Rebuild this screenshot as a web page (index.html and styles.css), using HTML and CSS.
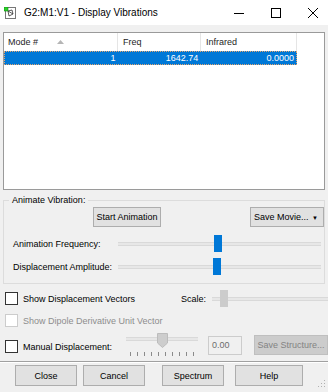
FILE: index.html
```html
<!DOCTYPE html>
<html lang="en">
<head>
    <meta charset="UTF-8">
    <title>G2:M1:V1 - Display Vibrations</title>
    <link rel="stylesheet" href="styles.css">
</head>
<body>
    <div class="titlebar">
        <svg class="app-icon" width="12" height="12" viewBox="0 0 12 12">
            <rect x="1.5" y="0.5" width="10" height="11" fill="#fff" stroke="#777"/>
            <path d="M4 4 L8 3 L9 7 L5 9 Z M4 4 L9 7" fill="none" stroke="#333" stroke-width="0.8"/>
            <rect x="0" y="0" width="4" height="4" fill="#2bd12b" stroke="#118811" stroke-width="0.6"/>
        </svg>
        <span class="title">G2:M1:V1 - Display Vibrations</span>
        <div class="win-buttons">
            <span class="win-btn"><svg width="10" height="10" viewBox="0 0 10 10"><path d="M0 5.5 H10" stroke="#000"/></svg></span>
            <span class="win-btn"><svg width="10" height="10" viewBox="0 0 10 10"><rect x="0.5" y="0.5" width="9" height="9" fill="none" stroke="#000"/></svg></span>
            <span class="win-btn"><svg width="10" height="10" viewBox="0 0 10 10"><path d="M0 0 L10 10 M10 0 L0 10" stroke="#000"/></svg></span>
        </div>
    </div>

    <div class="dialog">
        <div class="list">
            <div class="list-header">
                <div class="col col-mode">Mode #
                    <svg class="sort" width="7" height="4" viewBox="0 0 7 4"><path d="M0 4 L3.5 0 L7 4 Z" fill="#b5b5b5"/></svg>
                </div>
                <div class="col col-freq">Freq</div>
                <div class="col col-ir">Infrared</div>
            </div>
            <div class="list-row selected">
                <div class="cell col-mode">1</div>
                <div class="cell col-freq">1642.74</div>
                <div class="cell col-ir">0.0000</div>
            </div>
        </div>

        <fieldset class="group">
            <legend>Animate Vibration:</legend>
            <div class="group-buttons">
                <button class="btn btn-start">Start Animation</button>
                <button class="btn btn-movie">Save Movie... <span class="drop">&#9660;</span></button>
            </div>
            <div class="slider-row">
                <span class="slider-label">Animation Frequency:</span>
                <div class="slider">
                    <div class="track"></div>
                    <div class="thumb" style="left: 96px;"></div>
                </div>
            </div>
            <div class="slider-row">
                <span class="slider-label">Displacement Amplitude:</span>
                <div class="slider">
                    <div class="track"></div>
                    <div class="thumb" style="left: 95px;"></div>
                </div>
            </div>
        </fieldset>

        <div class="option-row">
            <label class="check"><span class="box"></span>Show Displacement Vectors</label>
            <span class="scale-label">Scale:</span>
            <div class="slider scale-slider">
                <div class="track"></div>
                <div class="thumb thumb-off" style="left: 8px;"></div>
            </div>
        </div>

        <div class="option-row dipole">
            <label class="check disabled"><span class="box"></span>Show Dipole Derivative Unit Vector</label>
        </div>

        <div class="option-row manual">
            <label class="check manual-check"><span class="box"></span>Manual Displacement:</label>
            <div class="tick-slider">
                <div class="track"></div>
                <svg class="tick-thumb" style="left: 31px;" width="11" height="15" viewBox="0 0 11 15">
                    <path d="M0.5 0.5 H10.5 V10 L5.5 14.5 L0.5 10 Z" fill="#cdcdcd" stroke="#bcbcbc"/>
                </svg>
                <div class="ticks">
                    <span></span><span></span><span></span><span></span><span></span>
                    <span></span><span></span><span></span><span></span><span></span>
                </div>
            </div>
            <div class="textbox">0.00</div>
            <button class="btn btn-structure" disabled>Save Structure...</button>
        </div>

        <div class="separator"></div>

        <div class="footer">
            <button class="btn btn-foot btn-close">Close</button>
            <button class="btn btn-foot btn-cancel">Cancel</button>
            <button class="btn btn-foot btn-spectrum">Spectrum</button>
            <button class="btn btn-foot btn-help">Help</button>
            <svg class="grip" width="8" height="8" viewBox="0 0 8 8">
                <rect x="6" y="0" width="1" height="1" fill="#b0b0b0"/>
                <rect x="3" y="3" width="1" height="1" fill="#b0b0b0"/>
                <rect x="6" y="3" width="1" height="1" fill="#b0b0b0"/>
                <rect x="0" y="6" width="1" height="1" fill="#b0b0b0"/>
                <rect x="3" y="6" width="1" height="1" fill="#b0b0b0"/>
                <rect x="6" y="6" width="1" height="1" fill="#b0b0b0"/>
            </svg>
        </div>
    </div>
</body>
</html>
```

FILE: styles.css
```css
body {
    margin: 0;
    width: 328px;
    height: 392px;
    overflow: hidden;
    background: #f0f0f0;
    font-family: "Liberation Sans", Arial, sans-serif;
    font-size: 9px;
    color: #000;
}

.titlebar {
    height: 25px;
    background: #fff;
    display: flex;
    align-items: center;
    overflow: hidden;
}

.app-icon {
    margin-left: 4px;
}

.title {
    margin-left: 8px;
    font-size: 10px;
    color: #000;
}

.win-buttons {
    display: flex;
    margin-left: auto;
    margin-right: -3px;
}

.win-btn {
    width: 37px;
    height: 25px;
    display: flex;
    align-items: center;
    justify-content: center;
}

.dialog {
    padding: 7px 3px 0;
}

.list {
    height: 156px;
    background: #fff;
    border: 1px solid #9a9a9a;
}

.list-header {
    display: flex;
    height: 18px;
}

.col {
    display: flex;
    align-items: center;
    padding-left: 4px;
    box-sizing: border-box;
    border-right: 1px solid #e5e5e5;
    color: #1e1e1e;
}

.col-mode {
    width: 114px;
}

.col-freq {
    width: 83px;
}

.col-ir {
    width: 96px;
}

.col-freq.col,
.col-ir.col {
    padding-left: 5px;
}

.sort {
    margin-left: 19px;
}

.list-row {
    display: flex;
    height: 14px;
    width: 293px;
    box-sizing: border-box;
    border: 1px dotted #e5a56e;
}

.list-row.selected {
    background: #0078d7;
    color: #fff;
}

.cell {
    text-align: right;
    line-height: 12px;
    padding-right: 2px;
    box-sizing: border-box;
}

.cell.col-mode {
    width: 113px;
}

.group {
    margin: 4px 0 0;
    padding: 1px 0 5px;
    border: 1px solid #dcdcdc;
    min-width: 0;
}

.group legend {
    margin-left: 5px;
    padding: 0 3px;
    line-height: 12px;
}

.group-buttons {
    display: flex;
}

.btn {
    font-family: "Liberation Sans", Arial, sans-serif;
    font-size: 9px;
    color: #000;
    background: #e1e1e1;
    border: 1px solid #adadad;
    height: 20px;
    padding: 0;
    box-sizing: border-box;
}

.btn-start {
    margin-left: 89px;
    width: 68px;
}

.btn-movie {
    margin-left: auto;
    width: 74px;
    padding-left: 3px;
    text-align: left;
}

.drop {
    font-size: 6px;
    margin-left: 1px;
}

.slider-row {
    display: flex;
    align-items: center;
    height: 23px;
}

.group-buttons + .slider-row {
    margin-top: 5px;
}

.slider-label {
    width: 105px;
    padding-left: 9px;
}

.slider {
    position: relative;
    width: 203px;
    height: 17px;
}

.track {
    position: absolute;
    left: 0;
    right: 0;
    top: 7px;
    height: 2px;
    background: #e7e7e7;
    border: 1px solid #d9d9d9;
    border-width: 1px 0;
}

.thumb {
    position: absolute;
    top: 0;
    width: 8px;
    height: 17px;
    background: #0078d7;
}

.thumb-off {
    background: #cccccc;
}

.option-row {
    display: flex;
    align-items: center;
    height: 17px;
    margin-top: 6px;
}

.check {
    display: flex;
    align-items: center;
    width: 178px;
}

.box {
    width: 13px;
    height: 13px;
    box-sizing: border-box;
    border: 1px solid #333;
    background: #fff;
    margin-left: 2px;
    margin-right: 5px;
}

.check.disabled {
    color: #8d8d8d;
    width: auto;
}

.check.disabled .box {
    border-color: #cccccc;
}

.scale-label {
    width: 31px;
}

.scale-slider {
    flex: 1;
    margin-right: -3px;
}

.option-row.dipole {
    margin-top: 5px;
}

.option-row.manual {
    align-items: flex-start;
    height: 25px;
    margin-top: 4px;
}

.manual-check {
    width: 123px;
    margin-top: 7px;
}

.tick-slider {
    position: relative;
    width: 72px;
    height: 25px;
}

.tick-slider .track {
    top: 4px;
}

.tick-thumb {
    position: absolute;
    top: 0;
}

.ticks {
    position: absolute;
    left: 4px;
    right: 4px;
    top: 19px;
    display: flex;
    justify-content: space-between;
}

.ticks span {
    width: 1px;
    height: 4px;
    background: #8a8a8a;
}

.textbox {
    margin-left: 10px;
    margin-top: 3px;
    width: 34px;
    height: 19px;
    box-sizing: border-box;
    border: 1px solid #cccccc;
    background: #f0f0f0;
    color: #6d6d6d;
    padding-left: 3px;
    line-height: 17px;
}

.btn-structure {
    margin-left: 12px;
    margin-top: 2px;
    margin-right: -3px;
    width: 74px;
    background: #cccccc;
    border-color: #bfbfbf;
    color: #838383;
}

.separator {
    margin: 3px -3px 0;
    border-top: 1px solid #a0a0a0;
    border-bottom: 1px solid #fff;
}

.footer {
    display: flex;
    margin-top: 2px;
    height: 25px;
}

.btn-foot {
    width: 62px;
    height: 21px;
}

.btn-close {
    margin-left: 12px;
}

.btn-cancel {
    margin-left: 6px;
}

.btn-spectrum {
    margin-left: 17px;
}

.btn-help {
    margin-left: 11px;
    width: 68px;
}

.grip {
    margin-left: auto;
    margin-right: -1px;
    margin-bottom: 2px;
    align-self: flex-end;
}
```
